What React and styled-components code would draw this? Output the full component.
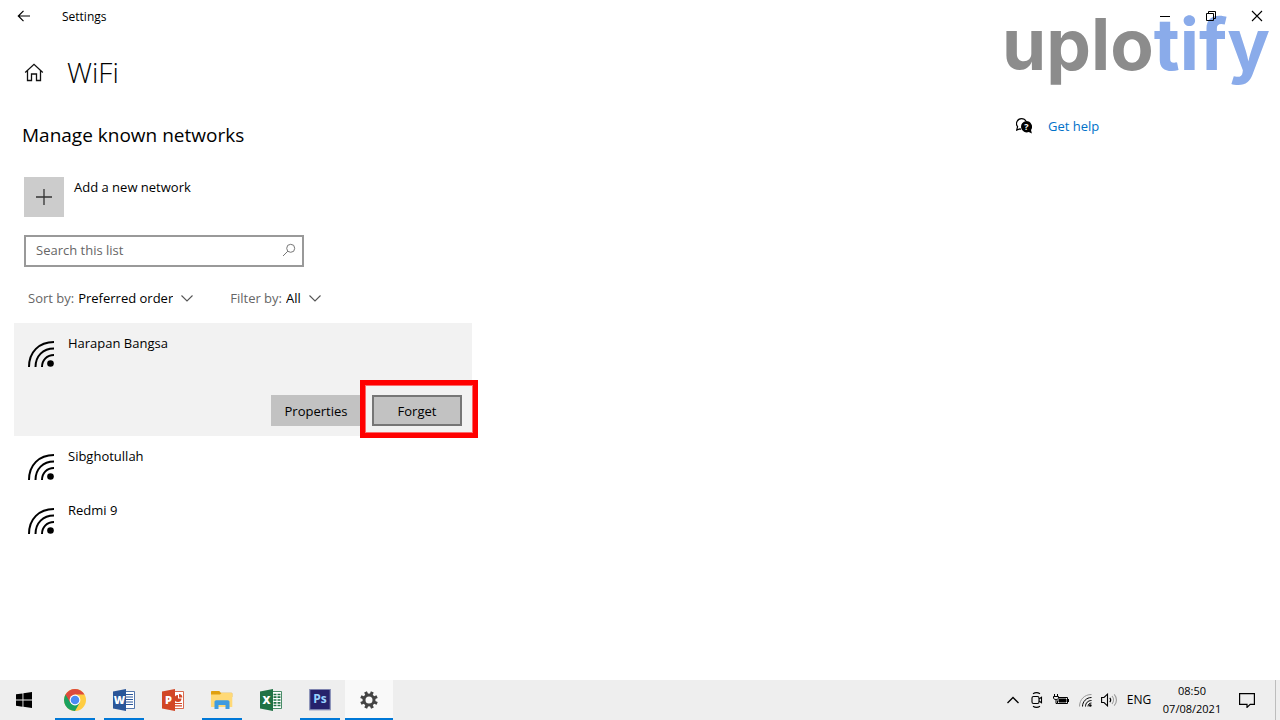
import React, { useState } from 'react';
import styled, { createGlobalStyle, css } from 'styled-components';

const GlobalStyle = createGlobalStyle`
  body {
    margin: 0;
    background-color: #ffffff;
    color: #000000;
    font-family: 'Open Sans', 'Noto Sans', sans-serif;
    font-size: 13px;
    line-height: 20px;
  }

  button, input, select {
    font: inherit;
    color: inherit;
  }

  svg {
    display: block;
    flex-shrink: 0;
  }
`;

const Window = styled.div`
  position: relative;
  min-height: 100vh;
  display: flex;
  flex-direction: column;
`;

const TitleBar = styled.header`
  display: flex;
  align-items: center;
  height: 32px;
`;

const TitleButton = styled.button`
  display: flex;
  align-items: center;
  justify-content: center;
  width: ${({ $wide }) => ($wide ? '48px' : '46px')};
  height: 32px;
  padding: 0;
  border: none;
  background: none;
`;

const AppName = styled.span`
  margin-left: 14px;
  padding-top: 2px;
  font-size: 12px;
`;

const CaptionButtons = styled.div`
  position: relative;
  z-index: 1;
  display: flex;
  margin-left: auto;
`;

const Watermark = styled.div`
  position: absolute;
  top: 2px;
  right: 10px;
  color: #8c8c8c;
  font-family: Inter, 'Open Sans', sans-serif;
  font-size: 71px;
  font-weight: 700;
  line-height: 84px;

  span {
    color: #8aabea;
  }
`;

const PageHeader = styled.div`
  display: flex;
  align-items: center;
  gap: 23px;
  height: 80px;
  padding-left: 24px;
`;

const HomeButton = styled.button`
  padding: 0;
  border: none;
  background: none;
`;

const PageTitle = styled.h1`
  margin: 0;
  font-size: 28px;
  font-weight: 300;
  line-height: 36px;
`;

const Content = styled.main`
  flex: 1;
  display: grid;
  grid-template-columns: minmax(0, 1fr) 264px;
`;

const Networks = styled.section`
  max-width: 458px;
  padding: 9px 14px 0;
`;

const SectionTitle = styled.h2`
  margin: 0 0 28px 8px;
  font-size: 19px;
  font-weight: 400;
  line-height: 28px;
`;

const AddButton = styled.button`
  display: flex;
  align-items: flex-start;
  gap: 10px;
  margin-left: 10px;
  padding: 0;
  border: none;
  background: none;
`;

const AddTile = styled.span`
  display: flex;
  align-items: center;
  justify-content: center;
  width: 40px;
  height: 40px;
  background-color: #cccccc;
`;

const SearchBox = styled.label`
  display: flex;
  align-items: center;
  box-sizing: border-box;
  width: 280px;
  height: 32px;
  margin: 18px 0 0 10px;
  padding: 0 6px 2px 10px;
  border: 2px solid #999999;
`;

const SearchInput = styled.input`
  flex: 1;
  min-width: 0;
  padding: 0;
  border: none;
  outline: none;
  background: none;

  &::placeholder {
    color: #666666;
    opacity: 1;
  }
`;

const Filters = styled.div`
  display: flex;
  gap: 37px;
  margin: 21px 0 15px 14px;
`;

const FilterLabel = styled.label`
  display: flex;
  align-items: center;
  gap: 4px;
  color: #666666;
`;

const FilterSelect = styled.select`
  field-sizing: content;
  appearance: none;
  margin-right: 4px;
  padding: 0;
  border: none;
  background: none;
  color: #000000;
`;

const NetworkList = styled.ul`
  width: 458px;
  max-width: 100vw;
  margin: 0;
  padding: 0;
  list-style: none;
`;

const NetworkItem = styled.li`
  box-sizing: border-box;
  min-height: 54px;
  padding: 10px 10px 0 14px;

  ${({ $selected }) => $selected && css`
    padding-bottom: 10px;
    background-color: #f2f2f2;
  `}
`;

const NetworkRow = styled.div`
  display: flex;
  align-items: flex-start;
  gap: 14px;

  svg {
    margin-top: 8px;
  }
`;

const ItemActions = styled.div`
  display: flex;
  justify-content: flex-end;
  gap: 11px;
  margin-top: 28px;
`;

const ActionButton = styled.button`
  box-sizing: border-box;
  width: 90px;
  height: 31px;
  padding: 0;
  border: 2px solid ${({ $focused }) => ($focused ? '#767676' : '#c2c2c2')};
  background-color: #c2c2c2;
`;

const Marked = styled.div`
  position: relative;
  display: flex;

  &::after {
    content: '';
    position: absolute;
    inset: -15px -16px -12px -12px;
    border: 5px solid #ff0000;
    box-shadow: inset 0 0 0 1px #f96a6a;
    pointer-events: none;
  }
`;

const Help = styled.aside`
  padding-top: 4px;
`;

const HelpLink = styled.a`
  display: inline-flex;
  align-items: center;
  gap: 16px;
  color: #0071c9;
  text-decoration: none;

  svg {
    color: #000000;
  }
`;

const Taskbar = styled.footer`
  display: flex;
  justify-content: space-between;
  height: 40px;
  background-color: #eeeeee;
`;

const TaskGroup = styled.nav`
  display: flex;
  gap: 1px;
`;

const TaskButton = styled.button`
  display: flex;
  align-items: center;
  justify-content: center;
  width: 48px;
  height: 40px;
  padding: 0;
  border: none;
  background: ${({ $active }) => ($active ? '#f9f9f9' : 'none')};

  ${({ $running, $active }) => $running && css`
    background-image: linear-gradient(#0078d7, #0078d7);
    background-repeat: no-repeat;
    background-position: bottom;
    background-size: ${$active ? '48px' : '40px'} 2px;
  `}
`;

const StartButton = styled(TaskButton)`
  margin-right: 2px;
`;

const Tray = styled.div`
  display: flex;
`;

const TrayButton = styled.button`
  display: flex;
  align-items: center;
  justify-content: center;
  width: ${({ $width }) => $width || 24}px;
  padding: 0;
  border: none;
  background: none;
  font-size: 12px;
`;

const Clock = styled.time`
  display: flex;
  flex-direction: column;
  align-items: center;
  width: 70px;
  padding-top: 2px;
  font-size: 11px;
  line-height: 18px;
`;

const ShowDesktop = styled.button`
  width: 5px;
  margin-left: 8px;
  padding: 0;
  border: none;
  border-left: 1px solid #bdbdbd;
  background: none;
`;

const BackIcon = () => (
  <svg width="14" height="14" viewBox="0 0 14 14" fill="none" stroke="#000" strokeWidth="1.2">
    <path d="M13 7H1.5M6.5 1.8 1.3 7l5.2 5.2" />
  </svg>
);

const MinimizeIcon = () => (
  <svg width="12" height="12" viewBox="0 0 12 12" fill="none" stroke="#000">
    <path d="M1 6.5h10" />
  </svg>
);

const RestoreIcon = () => (
  <svg width="12" height="12" viewBox="0 0 12 12" fill="none" stroke="#000">
    <path d="M1.5 3.5h7v7h-7zM3.5 3.5v-2h7v7h-2" />
  </svg>
);

const CloseIcon = () => (
  <svg width="12" height="12" viewBox="0 0 12 12" fill="none" stroke="#000" strokeWidth="1.1">
    <path d="m1 1 10 10M11 1 1 11" />
  </svg>
);

const HomeIcon = () => (
  <svg width="20" height="20" viewBox="0 0 20 20" fill="none" stroke="#111" strokeWidth="1.3">
    <path d="M1.2 10.5 10 2.3l8.8 8.2M3.5 8.7v9.8h4V12h5v6.5h4V8.7" />
  </svg>
);

const PlusIcon = () => (
  <svg width="16" height="16" viewBox="0 0 16 16" fill="none" stroke="#333" strokeWidth="1.3">
    <path d="M8 0v16M0 8h16" />
  </svg>
);

const SearchIcon = () => (
  <svg width="14" height="14" viewBox="0 0 14 14" fill="none" stroke="#777">
    <circle cx="8.7" cy="5.3" r="4" />
    <path d="M5.9 8.1 1 13" />
  </svg>
);

const ChevronDown = () => (
  <svg width="12" height="8" viewBox="0 0 12 8" fill="none" stroke="#555" strokeWidth="1.1">
    <path d="M.5 1.5 6 7l5.5-5.5" />
  </svg>
);

const WifiIcon = () => (
  <svg width="26" height="26" viewBox="0 0 26 26" fill="none" stroke="#000" strokeWidth="2">
    <path d="M1 26C1 11 11 1 26 1M7.5 26C7.5 15 15 7.5 26 7.5M14 26c0-7 5-12 12-12" />
    <circle cx="22.5" cy="22.5" r="3.3" fill="#000" stroke="none" />
  </svg>
);

const HelpIcon = () => (
  <svg width="16" height="16" viewBox="0 0 16 16">
    <path d="M5.5.6a5 5 0 0 0-3.900 8.100L.7 12l3-1.100 1.500.2M5.500.6c2 0 3.700 1 4.600 2.700" fill="none" stroke="#000" strokeWidth="1.2" />
    <path d="M10.300 3a5.700 5.700 0 1 0 2.500 11l3.100 1.500-.9-3.400A5.800 5.800 0 0 0 10.300 3z" />
    <text x="10.400" y="12.200" fill="#fff" fontFamily="Open Sans, sans-serif" fontSize="9" fontWeight="700" textAnchor="middle">?</text>
  </svg>
);

const StartIcon = () => (
  <svg width="16" height="16" viewBox="0 0 16 16">
    <path d="M0 2.3 6.5 1.4v6.200H0zM7.400 1.200 16 0v7.600H7.400zM0 8.500h6.500v6.200L0 13.800zM7.400 8.500H16V16l-8.600-1.200z" />
  </svg>
);

const ChromeIcon = () => (
  <svg width="22" height="22" viewBox="0 0 22 22">
    <circle cx="11" cy="11" r="11" fill="#ffcd42" />
    <path d="M11 11 1.500 5.500A11 11 0 0 0 11 22l4.700-8.300z" fill="#1aa15f" />
    <path d="M11 11 6.300 13.700 1.500 5.500A11 11 0 0 1 20.500 5.500H11z" fill="#dc4a3d" />
    <circle cx="11" cy="11" r="5.400" fill="#fff" />
    <circle cx="11" cy="11" r="4.300" fill="#4a8af4" />
  </svg>
);

const OfficeIcon = ({ letter, color, children }) => (
  <svg width="22" height="22" viewBox="0 0 22 22">
    <path d="M12 2.500h9.500v17H12z" fill="#fff" stroke={color} strokeWidth=".8" />
    {children}
    <path d="M0 2.500 13 0v22L0 19.500z" fill={color} />
    <text x="6.500" y="15" fill="#fff" fontFamily="Open Sans, sans-serif" fontSize="11" fontWeight="800" textAnchor="middle">
      {letter}
    </text>
  </svg>
);

const WordIcon = () => (
  <OfficeIcon letter="W" color="#2a5699">
    <path d="M13 5.500h7M13 8h7M13 10.500h7M13 13h7M13 15.500h7" stroke="#2a5699" strokeWidth="1.200" />
  </OfficeIcon>
);

const PowerPointIcon = () => (
  <OfficeIcon letter="P" color="#d24625">
    <path d="M16 6a3.500 3.500 0 1 0 3.500 3.500H16z" fill="#d24625" />
    <path d="M17 5v3.500h3.300A3.500 3.500 0 0 0 17 5z" fill="#d24625" />
    <path d="M13 14.500h7M13 16.800h7" stroke="#d24625" strokeWidth="1.200" />
  </OfficeIcon>
);

const ExcelIcon = () => (
  <OfficeIcon letter="X" color="#207245">
    <path d="M13.500 5.500h3M17.500 5.500h3M13.500 8.200h3M17.500 8.200h3M13.500 11h3M17.500 11h3M13.500 13.800h3M17.500 13.800h3M13.500 16.500h3M17.500 16.500h3" stroke="#207245" strokeWidth="1.700" />
  </OfficeIcon>
);

const ExplorerIcon = () => (
  <svg width="22" height="20" viewBox="0 0 22 20">
    <path d="M0 1.800C0 1.300.500 1 1 1h7.300l1.500 1.800h10.700c.5 0 .8.300.8.800V7H0z" fill="#e0a010" />
    <path d="M0 4.500h9L10.500 3h10c.5 0 .8.300.8.800V17H0z" fill="#ffd977" />
    <path d="M3.500 19v-7c0-1 .7-1.700 1.700-1.700h11.600c1 0 1.700.7 1.700 1.700v7h-4v-4h-7v4z" fill="#3f9be0" />
  </svg>
);

const PhotoshopIcon = () => (
  <svg width="22" height="22" viewBox="0 0 22 22">
    <rect x=".7" y=".2" width="20.600" height="20.600" fill="#26216b" stroke="#8a92b8" strokeWidth="1.200" />
    <text x="11" y="14" fill="#9bd2ff" fontFamily="Open Sans, sans-serif" fontSize="12" fontWeight="700" textAnchor="middle">
      Ps
    </text>
  </svg>
);

const GearIcon = () => (
  <svg width="18" height="18" viewBox="0 0 18 18" fill="none" stroke="#444">
    <circle cx="9" cy="9" r="5" strokeWidth="3" />
    {[0, 45, 90, 135, 180, 225, 270, 315].map((angle) => (
      <path key={angle} d="M9 3.500V.2" strokeWidth="3" transform={`rotate(${angle + 22} 9 9)`} />
    ))}
  </svg>
);

const ChevronUp = () => (
  <svg width="12" height="8" viewBox="0 0 12 8" fill="none" stroke="#000" strokeWidth="1.3">
    <path d="M.5 7 6 1.500 11.500 7" />
  </svg>
);

const MeetIcon = () => (
  <svg width="12" height="16" viewBox="0 0 12 16" fill="none" stroke="#000" strokeWidth="1.1">
    <rect x="1" y="4.500" width="7" height="7" rx="1.500" />
    <path d="m8 7 2.500-1.800v5.600L8 9M2 1.800c2-1.300 5-1.300 7 0M2 14.200c2 1.300 5 1.300 7 0" />
  </svg>
);

const BatteryIcon = () => (
  <svg width="16" height="12" viewBox="0 0 16 12" fill="none" stroke="#000">
    <path d="M6 3.500h8.500v6H4.500v-3M15.500 5v3M1.500 0v2M4.500 0v2M.5 2.500h5v1.500c0 2-5 2-5 0zM3 5.500v4h1.500" />
    <path d="M6 5h7v3H6z" fill="#000" />
  </svg>
);

const TrayWifiIcon = () => (
  <svg width="13" height="13" viewBox="0 0 13 13" fill="none" stroke="#000">
    <path d="M.5 12.500C.5 5.500 5.500.5 12.500.5" stroke="#999" />
    <path d="M3.500 12.500c0-5 4-9 9-9M6.500 12.500c0-3.500 2.500-6 6-6M9 12.500c0-2 1.500-3.500 3.500-3.500" />
    <circle cx="11.300" cy="11.500" r="1.300" fill="#000" stroke="none" />
  </svg>
);

const VolumeIcon = () => (
  <svg width="16" height="14" viewBox="0 0 16 14" fill="none" stroke="#000" strokeWidth="1.1">
    <path d="M.6 4.500H3L6.500 1.200v11.600L3 9.500H.6z" />
    <path d="M8.800 4.800c1.100 1.300 1.100 3.100 0 4.400" />
    <path d="M11 3c2 2.300 2 5.700 0 8M13.200 1.300c3 3.300 3 8.100 0 11.400" stroke="#999" />
  </svg>
);

const NoticeIcon = () => (
  <svg width="16" height="16" viewBox="0 0 16 16" fill="none" stroke="#000" strokeWidth="1.2">
    <path d="M.6 1.600h14.800v10.800h-4.200L8 15.400v-3H.6z" />
  </svg>
);

const networks = ['Harapan Bangsa', 'Sibghotullah', 'Redmi 9'];

const apps = [
  { name: 'Chrome', icon: ChromeIcon, running: true },
  { name: 'Word', icon: WordIcon, running: true },
  { name: 'PowerPoint', icon: PowerPointIcon },
  { name: 'File Explorer', icon: ExplorerIcon, running: true },
  { name: 'Excel', icon: ExcelIcon },
  { name: 'Photoshop', icon: PhotoshopIcon, running: true },
  { name: 'Settings', icon: GearIcon, running: true, active: true },
];

const trayItems = [
  { name: 'Show hidden icons', icon: ChevronUp },
  { name: 'Meet Now', icon: MeetIcon },
  { name: 'Battery', icon: BatteryIcon },
  { name: 'Network', icon: TrayWifiIcon },
  { name: 'Volume', icon: VolumeIcon },
];

const App = () => {
  const [search, setSearch] = useState('');
  const [selected, setSelected] = useState('Harapan Bangsa');

  return (
    <Window>
      <GlobalStyle />
      <Watermark>uplo<span>tify</span></Watermark>
      <TitleBar>
        <TitleButton $wide aria-label="Back"><BackIcon /></TitleButton>
        <AppName>Settings</AppName>
        <CaptionButtons>
          <TitleButton aria-label="Minimize"><MinimizeIcon /></TitleButton>
          <TitleButton aria-label="Restore"><RestoreIcon /></TitleButton>
          <TitleButton aria-label="Close"><CloseIcon /></TitleButton>
        </CaptionButtons>
      </TitleBar>
      <PageHeader>
        <HomeButton aria-label="Home"><HomeIcon /></HomeButton>
        <PageTitle>WiFi</PageTitle>
      </PageHeader>
      <Content>
        <Networks>
          <SectionTitle>Manage known networks</SectionTitle>
          <AddButton>
            <AddTile><PlusIcon /></AddTile>
            Add a new network
          </AddButton>
          <SearchBox>
            <SearchInput
              type="text"
              aria-label="Search this list"
              placeholder="Search this list"
              value={search}
              onChange={(e) => setSearch(e.target.value)}
            />
            <SearchIcon />
          </SearchBox>
          <Filters>
            <FilterLabel>
              Sort by:
              <FilterSelect><option>Preferred order</option></FilterSelect>
              <ChevronDown />
            </FilterLabel>
            <FilterLabel>
              Filter by:
              <FilterSelect><option>All</option></FilterSelect>
              <ChevronDown />
            </FilterLabel>
          </Filters>
          <NetworkList>
            {networks
              .filter((name) => name.toLowerCase().includes(search.toLowerCase()))
              .map((name) => (
                <NetworkItem key={name} $selected={name === selected} onClick={() => setSelected(name)}>
                  <NetworkRow>
                    <WifiIcon />
                    {name}
                  </NetworkRow>
                  {name === selected && (
                    <ItemActions>
                      <ActionButton>Properties</ActionButton>
                      <Marked>
                        <ActionButton $focused>Forget</ActionButton>
                      </Marked>
                    </ItemActions>
                  )}
                </NetworkItem>
              ))}
          </NetworkList>
        </Networks>
        <Help>
          <HelpLink href="#help"><HelpIcon /> Get help</HelpLink>
        </Help>
      </Content>
      <Taskbar>
        <TaskGroup>
          <StartButton aria-label="Start"><StartIcon /></StartButton>
          {apps.map(({ name, icon: Icon, running, active }) => (
            <TaskButton key={name} aria-label={name} $running={running} $active={active}>
              <Icon />
            </TaskButton>
          ))}
        </TaskGroup>
        <Tray>
          {trayItems.map(({ name, icon: Icon }) => (
            <TrayButton key={name} aria-label={name}><Icon /></TrayButton>
          ))}
          <TrayButton $width={36}>ENG</TrayButton>
          <Clock>
            <span>08:50</span>
            <span>07/08/2021</span>
          </Clock>
          <TrayButton $width={40} aria-label="Notifications"><NoticeIcon /></TrayButton>
          <ShowDesktop aria-label="Show desktop" />
        </Tray>
      </Taskbar>
    </Window>
  );
};

export default App;
